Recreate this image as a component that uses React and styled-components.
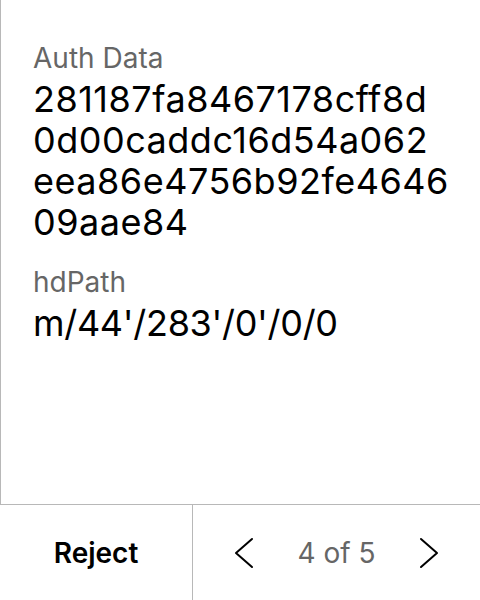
import React from "react";
import styled, { createGlobalStyle } from "styled-components";

const Global = createGlobalStyle`
  html, body { margin: 0; padding: 0; background: #fff; }
  body { font-family: Inter, "Noto Sans", sans-serif; }
  * { box-sizing: border-box; }
`;

const Screen = styled.div`
  width: 480px;
  height: 600px;
  display: flex;
  flex-direction: column;
  background: #fff;
`;

const Content = styled.div`
  flex: 1;
  border-left: 1px solid #b8b8b8;
  padding: 41px 24px 0 32px;
  display: flex;
  flex-direction: column;
  gap: 22px;
`;

const Field = styled.div`
  display: flex;
  flex-direction: column;
  gap: 4px;
`;

const Label = styled.div`
  font-size: 28px;
  line-height: 34px;
  color: #666;
`;

const Value = styled.div`
  font-size: 36px;
  line-height: 41px;
  color: #000;
  letter-spacing: ${(p) => (p.$hex ? "0.5px" : "-0.3px")};
  word-break: break-all;
`;

const Line = styled.span`
  display: block;
`;

const Footer = styled.div`
  height: 96px;
  border-top: 1px solid #b8b8b8;
  display: flex;
`;

const RejectButton = styled.div`
  width: 193px;
  border-right: 1px solid #b8b8b8;
  display: flex;
  align-items: center;
  justify-content: center;
  font-size: 28px;
  font-weight: 600;
  color: #000;
`;

const Pager = styled.div`
  flex: 1;
  display: flex;
  align-items: center;
  justify-content: space-between;
  padding: 0 41px 0 41px;
`;

const PageText = styled.div`
  font-size: 28px;
  color: #666;
`;

const Chevron = ({ dir }) => (
  <svg width="20" height="32" viewBox="0 0 20 32" fill="none">
    <path
      d={dir === "left" ? "M18 2 L2 16 L18 30" : "M2 2 L18 16 L2 30"}
      stroke="#000"
      strokeWidth="2"
      strokeLinecap="round"
      strokeLinejoin="round"
    />
  </svg>
);

const authLines = [
  "281187fa8467178cff8d",
  "0d00caddc16d54a062",
  "eea86e4756b92fe4646",
  "09aae84",
];

export default function App() {
  return (
    <>
      <Global />
      <Screen>
        <Content>
          <Field>
            <Label>Auth Data</Label>
            <Value $hex>
              {authLines.map((l) => (
                <Line key={l}>{l}</Line>
              ))}
            </Value>
          </Field>
          <Field>
            <Label>hdPath</Label>
            <Value>m/44'/283'/0'/0/0</Value>
          </Field>
        </Content>
        <Footer>
          <RejectButton>Reject</RejectButton>
          <Pager>
            <Chevron dir="left" />
            <PageText>4 of 5</PageText>
            <Chevron dir="right" />
          </Pager>
        </Footer>
      </Screen>
    </>
  );
}
